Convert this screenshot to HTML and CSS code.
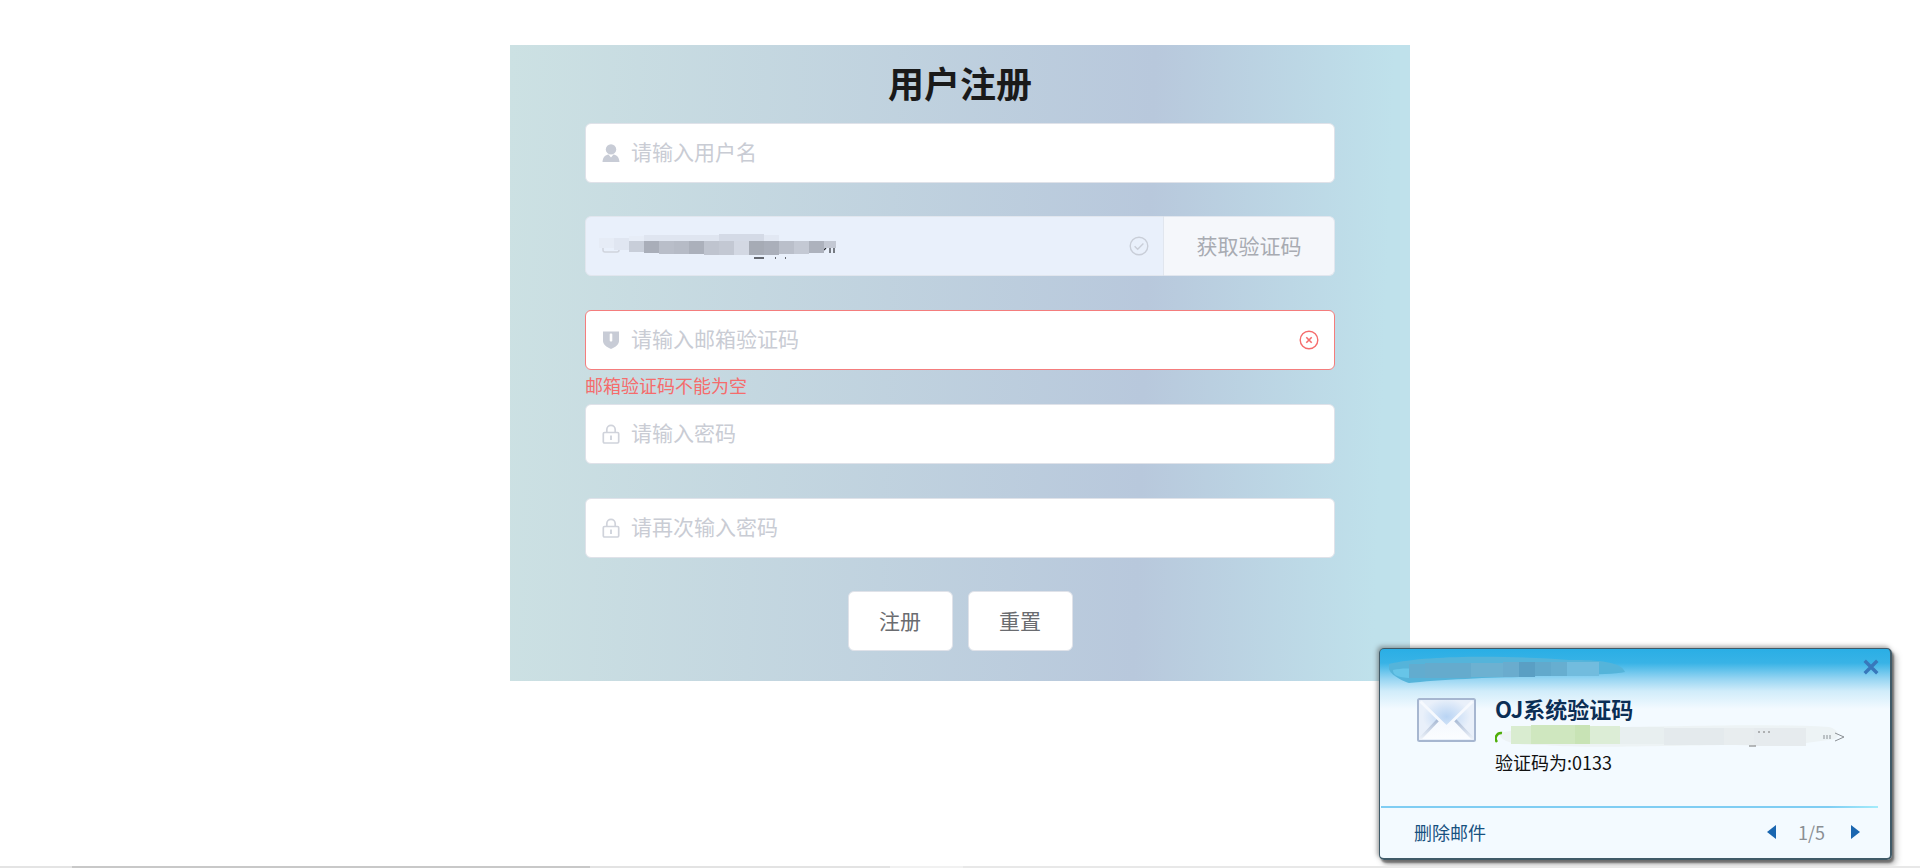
FILE: index.html
```html
<!DOCTYPE html>
<html lang="zh-CN">
<head>
<meta charset="utf-8">
<title>用户注册</title>
<link rel="stylesheet" href="styles.css">
</head>
<body>
<main class="page">
  <section class="card">
    <h1 class="title">用户注册</h1>
    <form class="form">
      <div class="item first">
        <div class="field">
          <svg class="icon" viewBox="0 0 20 20"><circle cx="10" cy="6.400" r="5.200" fill="#c8ccd6"/><path d="M1.500 19c.4-5 2.800-7 6-7.500L10 14.500l2.500-3c3.200.5 5.600 2.500 6 7.500z" fill="#c8ccd6"/></svg>
          <span class="ph">请输入用户名</span>
        </div>
      </div>
      <div class="item">
        <div class="field disabled">
          <svg class="icon" viewBox="0 0 20 20"><rect x="2" y="3" width="16" height="13" rx="2" fill="none" stroke="#d0d4dd" stroke-width="1.500"/></svg>
          <span class="grow"></span>
          <svg class="status" viewBox="0 0 20 20"><circle cx="10" cy="10" r="8.800" fill="none" stroke="#c9ced8" stroke-width="1.400"/><path d="M5.600 10.200l3.100 3.100 5.700-5.900" fill="none" stroke="#c9ced8" stroke-width="1.400"/></svg>
          <svg class="mosaic" viewBox="0 0 240 26" width="240" height="26">
            <path d="M225 16l2 -2M231 19v-8M235 19v-8" stroke="#2a2d33" stroke-width="1.200"/>
            <path d="M155 24h10M176 24h1M186 24h1" stroke="#3a3d44" stroke-width="1.500"/>
            <rect x="0" y="4" width="15" height="10" fill="#e6ecf6"/>
            <rect x="15" y="4" width="15" height="12" fill="#e0e6f1"/>
            <rect x="30" y="2" width="15" height="5" fill="#e7edf7"/>
            <rect x="45" y="1" width="75" height="6" fill="#dfe5f0"/>
            <rect x="120" y="0" width="45" height="7" fill="#d4dae6"/>
            <rect x="165" y="1" width="15" height="6" fill="#e2e8f3"/>
            <rect x="30" y="7" width="15" height="11" fill="#c8ced9"/>
            <rect x="45" y="7" width="15" height="12" fill="#a9aeb9"/>
            <rect x="60" y="7" width="15" height="13" fill="#b9bec9"/>
            <rect x="75" y="7" width="15" height="13" fill="#b6bbc6"/>
            <rect x="90" y="7" width="15" height="13" fill="#abb0bb"/>
            <rect x="105" y="7" width="15" height="14" fill="#bfc4cf"/>
            <rect x="120" y="7" width="15" height="14" fill="#c3c8d3"/>
            <rect x="135" y="7" width="15" height="14" fill="#d3d8e3"/>
            <rect x="150" y="7" width="15" height="14" fill="#a6abb5"/>
            <rect x="165" y="7" width="15" height="14" fill="#aaafba"/>
            <rect x="180" y="7" width="15" height="13" fill="#babfca"/>
            <rect x="195" y="7" width="15" height="13" fill="#c4c9d4"/>
            <rect x="210" y="7" width="15" height="12" fill="#adb2bd"/>
            <rect x="225" y="7" width="12" height="7" fill="#c3c8d3"/>
          </svg>
        </div>
        <button class="append" type="button">获取验证码</button>
      </div>
      <div class="item">
        <div class="field error">
          <svg class="icon" viewBox="0 0 20 20"><path d="M2 1.500h16v9.500c0 3.500-4 6.500-8 8-4-1.500-8-4.500-8-8z" fill="#c8ccd6"/><rect x="8.700" y="3.500" width="2.600" height="8" rx="1" fill="#fff"/></svg>
          <span class="ph grow">请输入邮箱验证码</span>
          <svg class="status" viewBox="0 0 20 20"><circle cx="10" cy="10" r="8.800" fill="none" stroke="#f56c6c" stroke-width="1.400"/><path d="M7.300 7.300l5.400 5.400M12.700 7.300l-5.400 5.400" stroke="#f56c6c" stroke-width="1.600"/></svg>
        </div>
        <div class="message">邮箱验证码不能为空</div>
      </div>
      <div class="item">
        <div class="field">
          <svg class="icon" viewBox="0 0 20 20"><path d="M5.800 8.500V5.500a4.200 4.200 0 0 1 8.400 0v3" fill="none" stroke="#d0d3db" stroke-width="1.700"/><rect x="2.300" y="8.500" width="15.400" height="10.500" rx="1.200" fill="none" stroke="#d0d3db" stroke-width="1.700"/><rect x="9.200" y="11.500" width="1.600" height="4.500" fill="#c8ccd6"/></svg>
          <span class="ph">请输入密码</span>
        </div>
      </div>
      <div class="item">
        <div class="field">
          <svg class="icon" viewBox="0 0 20 20"><path d="M5.800 8.500V5.500a4.200 4.200 0 0 1 8.400 0v3" fill="none" stroke="#d0d3db" stroke-width="1.700"/><rect x="2.300" y="8.500" width="15.400" height="10.500" rx="1.200" fill="none" stroke="#d0d3db" stroke-width="1.700"/><rect x="9.200" y="11.500" width="1.600" height="4.500" fill="#c8ccd6"/></svg>
          <span class="ph">请再次输入密码</span>
        </div>
      </div>
      <div class="actions">
        <button class="btn" type="button">注册</button>
        <button class="btn" type="button">重置</button>
      </div>
    </form>
  </section>
</main>

<aside class="toast">
  <header class="toast-head">
    <svg class="head-mosaic" viewBox="0 0 236 30" width="236" height="30">
      <path d="M0 10C40 0 130 2 180 6c20 0 52 0 56 12-20 4-70 2-100 5-30 0-90 3-116 6C16 28 -4 20 0 10z" fill="#55b4da"/>
      <path d="M4 16c10-2 16-2 24 0v8c-12 0-24 0-24-8z" fill="#67c5e8"/>
      <rect x="20" y="10" width="16" height="14" fill="#62accf"/>
      <rect x="36" y="9" width="46" height="15" fill="#65abcd"/>
      <rect x="82" y="9" width="32" height="14" fill="#6db1d1"/>
      <rect x="114" y="8" width="16" height="15" fill="#6aacce"/>
      <rect x="130" y="8" width="16" height="15" fill="#5a9fc4"/>
      <rect x="146" y="8" width="16" height="14" fill="#62a9cc"/>
      <rect x="162" y="8" width="16" height="14" fill="#67aed0"/>
      <rect x="178" y="8" width="32" height="14" fill="#72bcde"/>
    </svg>
    <svg class="close" viewBox="0 0 14 14" width="16" height="16"><path d="M1.500 1.500l11 11M12.500 1.500l-11 11" stroke="#3878bb" stroke-width="3"/></svg>
  </header>
  <div class="toast-body">
    <svg class="envelope" viewBox="0 0 59 44" width="59" height="44">
      <defs>
        <linearGradient id="envBg" x1="0" y1="0" x2="0" y2="1"><stop offset="0" stop-color="#f4f8fe"/><stop offset="1" stop-color="#fbfdff"/></linearGradient>
        <radialGradient id="envGlow" cx="0.500" cy="0.420" r="0.420"><stop offset="0" stop-color="#b9d4f4"/><stop offset="1" stop-color="#e9f0fa"/></radialGradient>
        <linearGradient id="envFold" x1="0" y1="1" x2="0" y2="0"><stop offset="0" stop-color="#eef3fa"/><stop offset="1" stop-color="#a9bad4"/></linearGradient>
      </defs>
      <rect x="1" y="1" width="57" height="42" rx="1.500" fill="url(#envGlow)" stroke="#a6b6d0" stroke-width="2"/>
      <path d="M3 41L21 22l8.500 6 8.500-6 18 19z" fill="url(#envBg)"/>
      <path d="M3 41L21 22M56 41L38 22" stroke="url(#envFold)" stroke-width="3" fill="none"/>
      <path d="M3.500 3.500l26 25.500 26-25.500" fill="none" stroke="#f6f9fe" stroke-width="3"/>
    </svg>
    <div class="toast-text">
      <h2 class="toast-title">OJ系统验证码</h2>
      <div class="toast-from">
        <svg class="from-mosaic" viewBox="0 0 352 24" width="352" height="24">
          <path d="M4 8c30-6 60-8 110-6 60 0 150-4 220 0 8 2 12 8 6 12-40 6-60 8-100 6-50 0-150 4-190 0-20 0-44 0-46-12z" fill="#edf3f5"/>
          <rect x="16" y="1" width="20" height="18" fill="#d9ecd0"/>
          <rect x="36" y="0" width="44" height="19" fill="#cfe7bf"/>
          <rect x="80" y="0" width="15" height="19" fill="#c8e3b5"/>
          <rect x="95" y="1" width="30" height="18" fill="#dcedd6"/>
          <rect x="125" y="2" width="44" height="17" fill="#e8eff0"/>
          <rect x="169" y="3" width="60" height="17" fill="#e4eaed"/>
          <rect x="229" y="3" width="30" height="17" fill="#e8edef"/>
          <rect x="259" y="3" width="52" height="18" fill="#e6ebee"/>
          <path d="M2 17a5.500 5.500 0 0 1 5-9" fill="none" stroke="#4fae0a" stroke-width="2.500"/>
          <path d="M254 21h7M263 7h2M268 7h2M273 7h2" stroke="#777" stroke-width="1"/>
          <path d="M329 10v4M332 10v4M335 10v4M340 8l9 4-9 4" fill="none" stroke="#8a8f94" stroke-width="1"/>
        </svg>
      </div>
      <p class="toast-code">验证码为:0133</p>
    </div>
  </div>
  <hr class="toast-rule">
  <footer class="toast-foot">
    <span class="toast-del">删除邮件</span>
    <span class="pager">
      <svg class="arrow" viewBox="0 0 9 14" width="9" height="14"><path d="M9 0v14L0 7z" fill="#1a66b0"/></svg>
      <span class="pager-num">1/5</span>
      <svg class="arrow" viewBox="0 0 9 14" width="9" height="14"><path d="M0 0v14l9-7z" fill="#1a66b0"/></svg>
    </span>
  </footer>
</aside>

<div class="scrollbar"><span class="thumb-a"></span><span class="thumb-b"></span><span class="thumb-c"></span><span class="thumb-d"></span></div>
</body>
</html>
```
FILE: styles.css
```css
* { box-sizing: border-box; }
html, body { margin: 0; height: 100%; }
body {
  background: #fff;
  font-family: "Noto Sans CJK SC", "Liberation Sans", sans-serif;
  overflow: hidden;
  position: relative;
}
.page { display: flex; justify-content: center; padding-top: 45px; }
.card {
  width: 900px;
  height: 636px;
  padding: 0 75px;
  background: linear-gradient(92deg, #cce1e3 0%, #b8c8dc 70%, #bfe1eb 96%);
}
.title {
  margin: 0;
  height: 78px;
  line-height: 75px;
  text-align: center;
  font-size: 36px;
  font-weight: 700;
  color: #1a1a1a;
}
.form { display: flex; flex-direction: column; }
.item { display: flex; height: 60px; margin-bottom: 34px; position: relative; }
.first { margin-bottom: 33px; }
.field {
  flex: 1;
  display: flex;
  align-items: center;
  height: 60px;
  padding: 0 15px;
  background: #fff;
  border: 1.500px solid #dfe2e9;
  border-radius: 6px;
  position: relative;
}
.icon { width: 20px; height: 20px; margin-right: 10px; flex: none; }
.ph { font-size: 21px; color: #c9ccd4; line-height: 1; padding-bottom: 4px; }
.grow { flex: 1; }
.status { width: 20px; height: 20px; flex: none; }
.disabled { background: #e9f0fb; border-color: #e1e6ee; border-radius: 6px 0 0 6px; }
.disabled .status { margin-right: -1px; }
.mosaic { position: absolute; left: 13px; top: 17px; }
.append {
  width: 171px;
  height: 60px;
  padding: 0 0 3px;
  background: #f5f7fb;
  border: 1.500px solid #e1e6ee;
  border-left: 0;
  border-radius: 0 6px 6px 0;
  font: inherit;
  font-size: 21px;
  color: #a8abb2;
}
.error { border-color: #f47d7d; }
.message {
  position: absolute;
  left: 0;
  top: 63px;
  font-size: 18px;
  line-height: 24px;
  color: #f56c6c;
}
.actions { display: flex; justify-content: center; gap: 15px; margin-top: -1px; }
.btn {
  width: 105px;
  height: 60px;
  padding: 0 0 3px;
  background: #fff;
  border: 1.500px solid #dfe2e9;
  border-radius: 6px;
  font: inherit;
  font-size: 21px;
  color: #6a6c70;
}
.toast {
  position: absolute;
  left: 1379px;
  top: 648px;
  width: 513px;
  height: 212px;
  display: flex;
  flex-direction: column;
  background: linear-gradient(180deg, #2aaee5 0, #38b3e6 14px, #97d5f2 30px, #d0ecfa 42px, #f3faff 60px);
  border: 1px solid #3f5a68;
  border-width: 1px 2px 2px 1px;
  border-radius: 5px;
  box-shadow: 2px 3px 2px rgba(50, 50, 50, .55), 4px 5px 6px rgba(80, 80, 80, .4), -2px -2px 4px rgba(90, 90, 90, .5);
}
.toast-head { height: 40px; flex: none; position: relative; }
.head-mosaic { position: absolute; left: 9px; top: 5px; }
.close { position: absolute; right: 11px; top: 10px; }
.toast-body { flex: 1; display: flex; padding: 9px 0 0 37px; }
.envelope { flex: none; }
.toast-text { margin-left: 19px; width: 400px; }
.toast-title {
  margin: -5px 0 2px;
  font-size: 22px;
  line-height: 30px;
  font-weight: 700;
  color: #0b2e55;
}
.toast-from { height: 24px; }
.toast-code {
  margin: 0;
  font-size: 18px;
  line-height: 26px;
  color: #111;
}
.toast-rule {
  flex: none;
  width: 497px;
  height: 2px;
  margin: 0 0 0 1px;
  border: 0;
  background: linear-gradient(90deg, #7fcdf3, #7fcdf3 90%, #a4ecfb);
}
.toast-foot {
  height: 50px;
  flex: none;
  display: flex;
  align-items: center;
  justify-content: space-between;
  padding: 0 30px 2px 34px;
}
.toast-del { font-size: 18px; color: #17517f; }
.pager { display: flex; align-items: center; gap: 22px; }
.pager-num { font-size: 18px; color: #8a8f94; margin-right: 4px; }
.scrollbar { position: absolute; left: 0; right: 0; bottom: 0; height: 2px; display: flex; background: #e8e8e8; }
.thumb-a { width: 72px; background: #e4e4e4; }
.thumb-b { width: 518px; background: #c8c8c8; }
.thumb-c { width: 300px; background: #e3e3e3; }
.thumb-d { width: 73px; background: #f1f1f1; }
```
